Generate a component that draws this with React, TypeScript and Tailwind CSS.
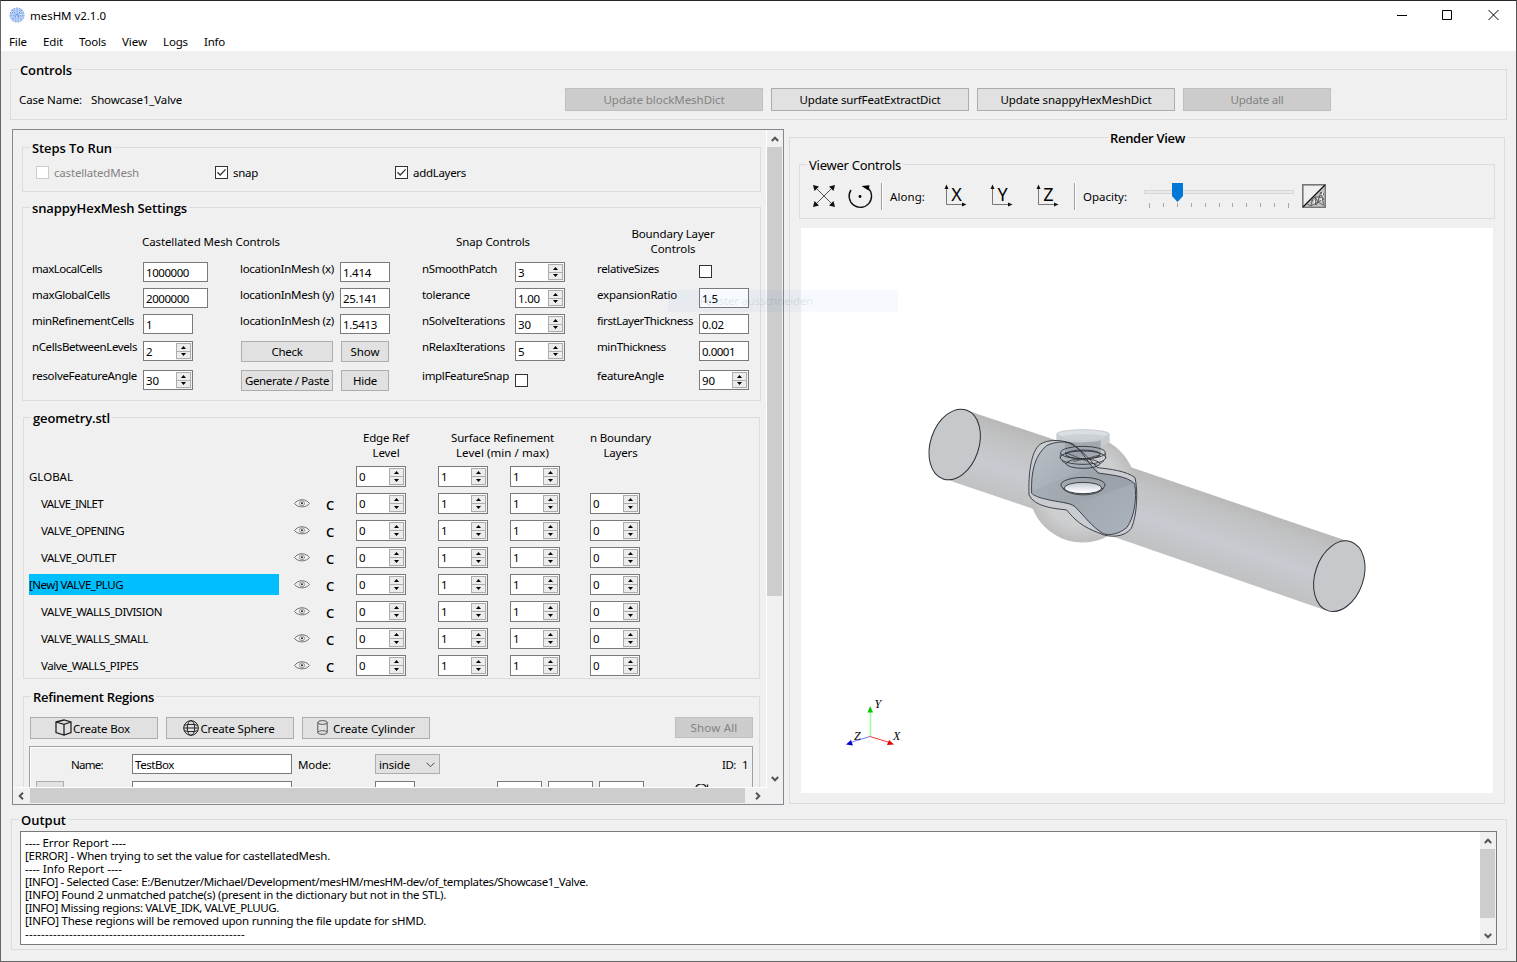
import { useLayoutEffect, useRef, useState } from "react";
import type { ReactNode } from "react";

/* Text run whose tracking is tuned so that it spans exactly `w` pixels. */
function Fit({ w, children, className = "" }: { w: number; children: string; className?: string }) {
  const ref = useRef<HTMLSpanElement>(null);
  const [ls, setLs] = useState(0);
  useLayoutEffect(() => {
    const el = ref.current;
    if (!el) return;
    const prev = el.style.letterSpacing;
    el.style.letterSpacing = "0px";
    const nat = el.getBoundingClientRect().width;
    el.style.letterSpacing = prev;
    setLs((w - nat) / children.length);
  }, [w, children]);
  return (
    <span ref={ref} className={"inline-block whitespace-pre " + className} style={{ letterSpacing: ls + "px" }}>
      {children}
    </span>
  );
}

function Group({ title, w, className = "", legendClass = "ml-[7px]", light = false, children }: {
  title: string; w: number; className?: string; legendClass?: string; light?: boolean; children?: ReactNode;
}) {
  return (
    <section className={"flex shrink-0 flex-col border border-[#dcdcdc] " + className}>
      <div className={"-mt-[10px] flex h-5 shrink-0 items-center self-start bg-[#f0f0f0] px-[2px] text-[13px] leading-5 " + legendClass + (light ? "" : " font-['Open_Sans','Noto_Sans',sans-serif] font-semibold")}>
        <Fit w={w}>{title}</Fit>
      </div>
      {children}
    </section>
  );
}

function Btn({ children, className = "", off = false }: { children?: ReactNode; className?: string; off?: boolean }) {
  return (
    <button className={"flex shrink-0 items-center justify-center border " + (off ? "border-[#bfbfbf] bg-[#cccccc] text-[#838383] " : "border-[#adadad] bg-[#e1e1e1] text-black ") + className}>
      {children}
    </button>
  );
}

function Check({ on = false, off = false }: { on?: boolean; off?: boolean }) {
  return (
    <span className={"flex size-[13px] shrink-0 items-center justify-center border bg-white " + (off ? "border-[#cccccc]" : "border-[#333333]")}>
      {on && (
        <svg width="11" height="11" viewBox="0 0 11 11" fill="none" stroke="#333" strokeWidth="1.3"><path d="M1.5 5.2 4.2 8 9.6 2.4" /></svg>
      )}
    </span>
  );
}

function Entry({ v = "", className = "w-[50px]", tw }: { v?: string; className?: string; tw?: number }) {
  return (
    <div className={"flex h-5 shrink-0 items-center border border-[#7a7a7a] bg-white pt-[2px] pl-[2px] leading-4 " + className}>
      <Fit w={tw ?? v.length * 6}>{v}</Fit>
    </div>
  );
}

function Spin({ v, className = "h-5 pt-px", tw }: { v: string; className?: string; tw?: number }) {
  return (
    <div className={"flex w-[50px] shrink-0 border border-[#7a7a7a] bg-white " + className}>
      <div className="flex flex-1 items-center pl-[2px] leading-4"><Fit w={tw ?? v.length * 6}>{v}</Fit></div>
      <div className="flex w-4 bg-[#f0f0f0] pr-px pb-px">
        <div className="flex flex-1 flex-col border border-[#acacac] bg-[#ececec]">
          <div className="flex flex-1 items-center justify-center border-b border-[#acacac]">
            <svg width="5" height="3" viewBox="0 0 5 3"><path d="M2.5 0 5 3H0z" /></svg>
          </div>
          <div className="flex flex-1 items-center justify-center">
            <svg width="5" height="3" viewBox="0 0 5 3"><path d="M2.5 3 5 0H0z" /></svg>
          </div>
        </div>
      </div>
    </div>
  );
}

function Chevron({ className = "" }: { className?: string }) {
  return (
    <svg className={className} width="8" height="6" viewBox="0 0 8 6" fill="none" stroke="#555" strokeWidth="2"><path d="M.8 5 4 1.7 7.2 5" /></svg>
  );
}

function AxisIcon({ l }: { l: string }) {
  return (
    <svg className="shrink-0 overflow-visible" width="24" height="24" viewBox="0 0 24 24">
      <path d="M3.5 4V20.5H19" fill="none" stroke="#777" />
      <path d="M1.5 5 3.5 .5 5.5 5zM19 18.500 23.500 20.500 19 22.500z" fill="#111" />
      <text x="13.500" y="16.500" fontSize="18" textAnchor="middle" fontFamily="Noto Sans, sans-serif">{l}</text>
    </svg>
  );
}

const menus: [string, number, string][] = [
  ["File", 18, "ml-2"], ["Edit", 20, "ml-4"], ["Tools", 27, "ml-4"], ["View", 25, "ml-4"], ["Logs", 25, "ml-4"], ["Info", 21, "ml-4"],
];

function TopBars() {
  return (
    <header className="shrink-0 bg-white">
      <div className="flex h-[30px] items-center pl-2">
        <svg className="-mt-[2px]" width="16" height="16" viewBox="0 0 16 16">
          <circle cx="8" cy="8" r="7.300" fill="#c9dbf8" />
          <g fill="none" stroke="#5b8fe0" strokeWidth=".9" strokeDasharray="1.700 1.200">
            <circle cx="8" cy="8" r="7" /><circle cx="8" cy="8" r="5.200" /><circle cx="8" cy="8" r="3.300" /><circle cx="8" cy="8" r="1.400" />
            <path d="M3 3l10 10M13 3 3 13" />
          </g>
        </svg>
        <Fit w={76} className="ml-[5px]">mesHM v2.1.0</Fit>
        <div className="flex-1" />
        <svg width="104" height="12" viewBox="0 0 104 12" className="mr-[16px] -mt-[2px]" fill="none" stroke="#000">
          <path d="M1 6.500h10M46.500 1.500h9v9h-9zM92.500 1l10 10M102.500 1l-10 10" />
        </svg>
      </div>
      <nav className="flex h-5 items-center pt-px">
        {menus.map(([t, w, m]) => <Fit key={t} w={w} className={m}>{t}</Fit>)}
      </nav>
    </header>
  );
}

function Controls() {
  return (
    <Group title="Controls" w={52} className="mt-[18px] ml-[9px] h-[51px] w-[1497px]">
      <div className="mt-2 flex h-[23px] items-center pl-2">
        <Fit w={63}>Case Name:</Fit>
        <Fit w={91} className="ml-[9px]">Showcase1_Valve</Fit>
        <Btn off className="ml-[383px] h-[23px] w-[198px]"><Fit w={121}>Update blockMeshDict</Fit></Btn>
        <Btn className="ml-2 h-[23px] w-[198px]"><Fit w={141}>Update surfFeatExtractDict</Fit></Btn>
        <Btn className="ml-2 h-[23px] w-[198px]"><Fit w={151}>Update snappyHexMeshDict</Fit></Btn>
        <Btn off className="ml-2 h-[23px] w-[148px]"><Fit w={53}>Update all</Fit></Btn>
      </div>
    </Group>
  );
}

function Steps() {
  return (
    <Group title="Steps To Run" w={80} className="mt-[17px] ml-[9px] h-[45px] w-[739px]">
      <div className="mt-2 flex h-[13px] items-center pl-[13px]">
        <Check off /><Fit w={85} className="ml-[5px] text-[#838383]">castellatedMesh</Fit>
        <span className="ml-[76px]" /><Check on /><Fit w={25} className="ml-[5px]">snap</Fit>
        <span className="ml-[137px]" /><Check on /><Fit w={53} className="ml-[5px]">addLayers</Fit>
      </div>
    </Group>
  );
}

function Label({ t, w, up = false }: { t: string; w: number; up?: boolean }) {
  return <div className={"h-[15px] leading-[15px] " + (up ? "-mt-[2px]" : "-mt-px")}><Fit w={w}>{t}</Fit></div>;
}

function Settings() {
  return (
    <Group title="snappyHexMesh Settings" w={155} className="mt-[15px] ml-[9px] h-[194px] w-[739px]">
      <div className="flex h-11 shrink-0 items-center pt-[2px] leading-[15px]">
        <Fit w={138} className="ml-[119px]">Castellated Mesh Controls</Fit>
        <Fit w={74} className="ml-[176px]">Snap Controls</Fit>
        <div className="ml-[93px] flex w-[100px] flex-col items-center"><Fit w={83}>Boundary Layer</Fit><Fit w={45}>Controls</Fit></div>
      </div>
      <div className="ml-[9px] grid grid-cols-[111px_97px_100px_82px_93px_82px_102px_60px] grid-rows-[26px_26px_27px_29px_21px] items-start justify-items-start">
        <Label t="maxLocalCells" w={70} /><Entry v="1000000" className="w-[65px]" tw={43} />
        <Label t="locationInMesh (x)" w={94} /><Entry v="1.414" tw={28} />
        <Label t="nSmoothPatch" w={75} /><Spin v="3" />
        <Label t="relativeSizes" w={62} /><span className="pt-[3px]"><Check /></span>

        <Label t="maxGlobalCells" w={78} /><Entry v="2000000" className="w-[65px]" tw={43} />
        <Label t="locationInMesh (y)" w={94} /><Entry v="25.141" tw={34} />
        <Label t="tolerance" w={48} /><Spin v="1.00" tw={22} />
        <Label t="expansionRatio" w={80} /><Entry v="1.5" tw={16} />

        <Label t="minRefinementCells" w={102} /><Entry v="1" />
        <Label t="locationInMesh (z)" w={94} /><Entry v="1.5413" tw={34} />
        <Label t="nSolveIterations" w={83} /><Spin v="30" tw={13} />
        <Label t="firstLayerThickness" w={96} /><Entry v="0.02" tw={22} />

        <Label up t="nCellsBetweenLevels" w={105} /><Spin v="2" />
        <Btn className="ml-px h-[21px] w-[92px]"><Fit w={31}>Check</Fit></Btn><Btn className="ml-px h-[21px] w-12"><Fit w={29}>Show</Fit></Btn>
        <Label up t="nRelaxIterations" w={83} /><Spin v="5" />
        <Label up t="minThickness" w={69} /><Entry v="0.0001" tw={33} />

        <Label up t="resolveFeatureAngle" w={105} /><Spin v="30" tw={13} />
        <Btn className="ml-px h-[21px] w-[92px]"><Fit w={84}>Generate / Paste</Fit></Btn><Btn className="ml-px h-[21px] w-12"><Fit w={24}>Hide</Fit></Btn>
        <Label up t="implFeatureSnap" w={87} /><span className="pt-1"><Check /></span>
        <Label up t="featureAngle" w={67} /><Spin v="90" tw={13} />
      </div>
    </Group>
  );
}

const patches: { n: string; w: number; sel?: boolean }[] = [
  { n: "VALVE_INLET", w: 62 }, { n: "VALVE_OPENING", w: 83 }, { n: "VALVE_OUTLET", w: 75 },
  { n: "[New] VALVE_PLUG", w: 94, sel: true },
  { n: "VALVE_WALLS_DIVISION", w: 121 }, { n: "VALVE_WALLS_SMALL", w: 107 }, { n: "Valve_WALLS_PIPES", w: 97 },
];

function Geometry() {
  return (
    <Group title="geometry.stl" w={77} className="mt-4 ml-[10px] h-[262px] w-[737px]">
      <div className="mt-[2px] flex h-9 shrink-0 leading-[15px]">
        <div className="ml-[322px] flex w-20 flex-col items-center"><Fit w={46}>Edge Ref</Fit><Fit w={27}>Level</Fit></div>
        <div className="ml-[7px] flex w-[140px] flex-col items-center pr-[1px]"><Fit w={103}>Surface Refinement</Fit><Fit w={93}>Level (min / max)</Fit></div>
        <div className="ml-[7px] flex w-20 flex-col items-center pl-[1px]"><Fit w={61}>n Boundary</Fit><Fit w={34}>Layers</Fit></div>
      </div>
      <div className="ml-[5px] flex flex-col gap-[6px]">
        <div className="flex h-[21px] items-center">
          <div className="w-[250px]"><Fit w={44}>GLOBAL</Fit></div>
          <Spin v="0" className="ml-[77px] h-[21px] pt-px" /><Spin v="1" className="ml-8 h-[21px] pt-px" /><Spin v="1" className="ml-[22px] h-[21px] pt-px" />
        </div>
        {patches.map((p) => (
          <div key={p.n} className="flex h-[21px] items-center">
            <div className={"flex h-[21px] w-[250px] items-center pt-px " + (p.sel ? "bg-[#00bfff]" : "pl-3")}><Fit w={p.w}>{p.n}</Fit></div>
            <svg className="ml-[15px]" width="16" height="9" viewBox="0 0 16 9" fill="none" stroke="#666" strokeWidth=".9">
              <path d="M.5 4.500C4-.5 12-.5 15.500 4.500 12 9 4 9 .5 4.500z" /><circle cx="8" cy="4.300" r="2.500" stroke="#888" /><circle cx="8" cy="4.300" r="1" fill="#222" stroke="none" />
            </svg>
            <span className="ml-4 w-[30px] pt-[2px] font-['Open_Sans','Noto_Sans',sans-serif] text-[13px] font-semibold">C</span>
            <Spin v="0" className="h-[21px] pt-px" /><Spin v="1" className="ml-8 h-[21px] pt-px" /><Spin v="1" className="ml-[22px] h-[21px] pt-px" /><Spin v="0" className="ml-[30px] h-[21px] pt-px" />
          </div>
        ))}
      </div>
    </Group>
  );
}

function Refinement() {
  return (
    <Group title="Refinement Regions" w={121} className="mt-[17px] ml-[10px] h-[200px] w-[737px]">
      <div className="mt-[10px] ml-[6px] flex">
        <Btn className="h-[22px] w-32 pr-[3px]">
          <svg className="-mt-px mr-[1px]" width="17" height="17" viewBox="0 0 17 17" fill="none" stroke="#222" strokeWidth="1.300"><path d="M1 3 9 1l7 2v10.500L9 16l-8-2.500zM1 3l8 2.300L16 3M9 5.300V16" /></svg>
          <Fit w={57} className="pt-px">Create Box</Fit>
        </Btn>
        <Btn className="ml-2 h-[22px] w-32 pr-[3px]">
          <svg className="-mt-px mr-[2px]" width="16" height="16" viewBox="0 0 16 16" fill="none" stroke="#222"><circle cx="8" cy="8" r="7.300" /><ellipse cx="8" cy="8" rx="3.700" ry="7.300" /><path d="M1.200 5.500C4 4 12 4 14.800 5.500M1.200 10.500C4 12 12 12 14.800 10.500M.7 8h14.600" /></svg>
          <Fit w={74} className="pt-px">Create Sphere</Fit>
        </Btn>
        <Btn className="ml-2 h-[22px] w-32">
          <svg className="-mt-px mr-[5px]" width="11" height="15" viewBox="0 0 11 15" fill="none" stroke="#555"><ellipse cx="5.500" cy="2.500" rx="4.700" ry="1.900" /><path d="M.8 2.500v10c0 2.400 9.400 2.400 9.400 0v-10M.8 12.500c0-2.400 9.400-2.400 9.400 0" /></svg>
          <Fit w={82} className="pt-px">Create Cylinder</Fit>
        </Btn>
        <Btn off className="ml-[245px] h-[21px] w-[78px]"><Fit w={47}>Show All</Fit></Btn>
      </div>
      <div className="mt-[7px] ml-[5px] h-[120px] w-[724px] border border-[#a0a0a0]">
        <div className="border-t border-l border-white">
          <div className="mt-[6px] flex h-5 items-center">
            <Fit w={32} className="ml-10 pt-[2px]">Name:</Fit>
            <div className="ml-[29px] flex h-5 w-[160px] items-center border border-[#7a7a7a] bg-white pt-[2px] pl-[2px]"><Fit w={39}>TestBox</Fit></div>
            <Fit w={33} className="ml-[6px] pt-[2px]">Mode:</Fit>
            <div className="ml-11 flex h-5 w-[65px] items-center justify-between border border-[#adadad] bg-[#e1e1e1] pt-[2px] pr-1 pl-[3px]">
              <Fit w={31}>inside</Fit>
              <svg width="9" height="6" viewBox="0 0 9 6" fill="none" stroke="#444"><path d="M.5 .7 4.500 4.700 8.500 .7" /></svg>
            </div>
            <Fit w={14} className="ml-[282px] pt-[2px]">ID:</Fit><Fit w={6} className="ml-[6px] pt-[2px]">1</Fit>
          </div>
          <div className="mt-[7px] flex items-start">
            <Btn className="ml-[5px] h-5 w-7" />
            <Entry className="ml-[68px] w-[160px]" /><Entry className="ml-[83px] w-10" />
            <Entry className="ml-[82px] w-[45px]" /><Entry className="ml-[6px] w-[45px]" /><Entry className="ml-[6px] w-[45px]" />
            <svg className="mt-[3px] ml-[51px]" width="14" height="12" viewBox="0 0 14 12" fill="none" stroke="#222" strokeWidth="1.400"><path d="M1 8A5.500 5.500 0 0 1 11 3M12.500 .5V4H9" /></svg>
          </div>
        </div>
      </div>
    </Group>
  );
}

function LeftPanel() {
  return (
    <div className="ml-[11px] flex h-[676px] w-[772px] shrink-0 flex-col border border-[#828790]">
      <div className="flex h-[657px]">
        <div className="h-[657px] w-[753px] overflow-hidden"><Steps /><Settings /><Geometry /><Refinement /></div>
        <div className="w-px bg-white" />
        <div className="flex w-[15px] flex-col items-center">
          <div className="flex h-[17px] shrink-0 items-center pt-px"><Chevron /></div>
          <div className="h-[449px] w-[15px] bg-[#cdcdcd]" />
          <div className="flex-1" />
          <div className="flex h-[17px] items-center"><Chevron className="rotate-180" /></div>
        </div>
      </div>
      <div className="mr-4 h-px shrink-0 bg-white" />
      <div className="flex h-4 items-start">
        <div className="flex h-[15px] w-[17px] items-center pl-1"><Chevron className="-rotate-90" /></div>
        <div className="h-[15px] w-[715px] bg-[#cdcdcd]" />
        <div className="ml-2 flex h-[15px] w-[9px] items-center justify-center"><Chevron className="rotate-90" /></div>
      </div>
    </div>
  );
}

function ViewerControls() {
  return (
    <Group title="Viewer Controls" w={92} light className="mt-4 ml-[9px] h-[55px] w-[696px]">
      <div className="flex h-[42px] items-center">
        <svg className="ml-[13px] shrink-0" width="22" height="22" viewBox="0 0 22 22">
          <path d="M2 2l18 18M20 2 2 20" stroke="#555" /><path d="M0 0l6 1.500L1.500 6zM22 0l-6 1.500L20.500 6zM0 22l6-1.500L1.500 16zM22 22l-6-1.500 4.500-4.500z" fill="#111" />
        </svg>
        <svg className="ml-3 shrink-0" width="26" height="26" viewBox="0 0 26 26">
          <path d="M4 7A11.200 11.200 0 1 0 21 5" fill="none" stroke="#111" strokeWidth="1.400" /><path d="M14.500 3 22.500 2.200 21.500 7.500z" /><circle cx="13" cy="13.500" r="1.400" />
        </svg>
        <div className="ml-2 h-[27px] w-px shrink-0 bg-[#a0a0a0]" /><div className="h-[27px] w-px shrink-0 bg-white" />
        <Fit w={35} className="ml-[7px] pt-[2px]">Along:</Fit>
        <span className="ml-[18px] flex gap-[22px]"><AxisIcon l="X" /><AxisIcon l="Y" /><AxisIcon l="Z" /></span>
        <div className="ml-[15px] h-[27px] w-px shrink-0 bg-[#a0a0a0]" /><div className="h-[27px] w-px shrink-0 bg-white" />
        <Fit w={44} className="ml-[7px] pt-[2px]">Opacity:</Fit>
        <svg className="ml-[17px] shrink-0" width="151" height="28" viewBox="0 0 151 28">
          <rect x=".5" y="8.500" width="149" height="3" fill="#e7eaea" stroke="#d6d6d6" />
          <path d="M5.500 21v5M19.500 21v4M33.500 21v4M47.500 21v4M61.500 21v4M75.500 21v4M88.500 21v4M102.500 21v4M116.500 21v4M130.500 21v4M144.500 21v5" stroke="#a8a79c" />
          <path d="M28 1h11v13l-5.500 6L28 14z" fill="#0078d7" />
        </svg>
        <svg className="ml-[7px] shrink-0" width="24" height="24" viewBox="0 0 24 24">
          <rect x=".8" y=".8" width="22.400" height="22.400" fill="none" stroke="#777" strokeWidth="1.600" />
          <path d="M2 22 22 2v20z" fill="#c4c4c4" /><path d="M1 23 23 1" stroke="#111" strokeWidth="1.300" />
          <path d="M5 20l4 2 1-6 4 5 2-3 5 3M10 16l3-3 3 5 1-5 5 2M13 13l4 0 2-5 3 3M14 21l-1-8M17 13l5-4M19 8l3 14M16 18l6-3M9 22l7-4" fill="none" stroke="#444" strokeWidth=".7" />
          <path d="M11 18l2 2v-4zM18 15l2 2v-3zM19 11l2 0v-3z" fill="#fff" />
        </svg>
      </div>
    </Group>
  );
}

function Scene() {
  return (
    <svg width="692" height="565" viewBox="801 228 692 565">
      <defs>
        <linearGradient id="pipe" gradientUnits="userSpaceOnUse" x1="1172" y1="481" x2="1149" y2="549">
          <stop offset="0" stopColor="#b9b9b9" /><stop offset=".2" stopColor="#c1c2c3" /><stop offset=".6" stopColor="#c7cad0" /><stop offset="1" stopColor="#c0c1c2" />
        </linearGradient>
        <radialGradient id="ball" cx=".5" cy=".5" r=".5"><stop offset="0" stopColor="#cdd0d5" /><stop offset=".7" stopColor="#cdced0" /><stop offset="1" stopColor="#bdbdbd" /></radialGradient>
        <linearGradient id="cut" x1="0" y1="0" x2="1" y2="1"><stop offset="0" stopColor="#bac0c6" /><stop offset=".5" stopColor="#a0a7af" /><stop offset="1" stopColor="#aab2bb" /></linearGradient>
        <linearGradient id="floor" x1="0" y1="0" x2="1" y2="0"><stop offset="0" stopColor="#a5abb2" /><stop offset="1" stopColor="#979da4" /></linearGradient>
        <linearGradient id="hole" x1="0" y1="0" x2="0" y2="1"><stop offset="0" stopColor="#bfc5cf" /><stop offset=".8" stopColor="#fafbff" /></linearGradient>
      </defs>
      <path d="M970 411.500 1060 441.500V518L942 478z" fill="url(#pipe)" />
      <path d="M1120 463.500 1348 541.300 1326 610.500 1100 532z" fill="url(#pipe)" />
      <circle cx="1082.500" cy="489" r="53.500" fill="url(#ball)" />
      <g fill="#c6c9cc" stroke="#2c2e32" strokeWidth="1">
        <ellipse cx="954.700" cy="444.500" rx="24.200" ry="36.300" transform="rotate(18.600 954.700 444.500)" />
        <ellipse cx="1339.300" cy="576.200" rx="24.200" ry="36.300" transform="rotate(18.600 1339.300 576.200)" />
      </g>
      <g transform="translate(1010 415) scale(.33333)" strokeLinejoin="round">
        <path d="M139 58C139 38 299 38 299 58L299 82 272 95H165L139 80z" fill="#c8cbcf" />
        <ellipse cx="219" cy="57" rx="76" ry="11" fill="#dadee5" />
        <ellipse cx="219" cy="66" rx="66" ry="9" fill="#cdd0d5" />
        <path d="M57 240C55 180 62 110 90 88 115 72 150 76 165 80 205 90 235 130 262 158 300 162 350 168 375 188 384 225 382 300 364 340 345 366 300 370 270 355 215 335 195 315 170 285 130 280 75 276 60 246z" fill="#c9ccd0" />
        <path d="M65 235C62 170 75 120 110 92 135 78 175 78 190 88 220 110 240 155 265 174 300 180 350 182 374 206 382 250 372 310 350 338 325 358 300 362 280 356 245 335 225 305 195 275 180 262 145 262 110 253 85 248 70 240 65 235z" fill="url(#cut)" />
        <path d="M66 228 255 150 266 173C300 180 345 182 373 205L190 270C150 262 95 252 66 228z" fill="url(#floor)" opacity=".75" />
        <path d="M165 78C185 84 252 84 272 76V125H165z" fill="#9199a4" opacity=".7" />
        <g fill="none" stroke="#30333a" strokeWidth="2.700">
          <path d="M57 240C55 180 62 110 90 88 115 72 150 76 165 80 205 90 235 130 262 158 300 162 350 168 375 188 384 225 382 300 364 340 345 366 300 370 270 355 215 335 195 315 170 285 130 280 75 276 57 240" />
          <path d="M65 235C62 170 75 120 110 92 135 78 175 78 190 88 220 110 240 155 265 174 300 180 350 182 374 206 382 250 372 310 350 338 325 358 300 362 280 356 245 335 225 305 195 275 180 262 145 262 110 253 85 248 70 240 65 235" />
          <ellipse cx="219" cy="113" rx="67" ry="19" /><ellipse cx="219" cy="118" rx="52" ry="13" /><ellipse cx="219" cy="128" rx="68" ry="20" /><ellipse cx="219" cy="146" rx="50" ry="14" />
          <path d="M151 115v16M287 115v16M156 138l14 10M282 138l-14 10M165 112l100 40M270 120l-80 20" strokeWidth="2" />
          <ellipse cx="219" cy="210" rx="66" ry="23" /><ellipse cx="219" cy="219" rx="56" ry="17" fill="url(#hole)" /><path d="M158 220C180 246 260 246 281 220" strokeWidth="2.500" />
        </g>
      </g>
      <path d="M870.500 736V712" stroke="#9f9" strokeWidth="1.500" /><path d="M867.500 712.500 870.200 706 873 712.500z" fill="#0c0" />
      <path d="M870 736.500 888 742" stroke="#f33" /><path d="M894 744.500 887 745 889 740z" fill="#d00" />
      <path d="M870 736.500 852 742" stroke="#77f" /><path d="M846 744.500 853 745.500 851 740z" fill="#00c" />
      <g fontFamily="Liberation Serif, serif" fontStyle="italic" fontSize="12"><text x="874.500" y="708">Y</text><text x="893" y="740">X</text><text x="854" y="740">Z</text></g>
    </svg>
  );
}

function RenderView() {
  return (
    <Group title="Render View" w={75} legendClass="ml-[318px]" className="mt-2 ml-[5px] h-[667px] w-[716px]">
      <ViewerControls />
      <div className="mt-[9px] ml-[11px] h-[565px] w-[692px] shrink-0 bg-white"><Scene /></div>
    </Group>
  );
}

const log: [string, number][] = [
  ["---- Error Report ----", 101], ["[ERROR] - When trying to set the value for castellatedMesh.", 305], ["---- Info Report ----", 97],
  ["[INFO] - Selected Case: E:/Benutzer/Michael/Development/mesHM/mesHM-dev/of_templates/Showcase1_Valve.", 563],
  ["[INFO] Found 2 unmatched patche(s) (present in the dictionary but not in the STL).", 421],
  ["[INFO] Missing regions: VALVE_IDK, VALVE_PLUUG.", 254],
  ["[INFO] These regions will be removed upon running the file update for sHMD.", 401],
  ["-------------------------------------------------------", 220],
];

function Output() {
  return (
    <Group title="Output" w={45} className="mt-[14px] ml-[10px] h-[131px] w-[1496px]">
      <div className="mt-px ml-2 flex h-[114px] w-[1477px] shrink-0 border border-[#7a7a7a] bg-white">
        <div className="flex flex-1 flex-col pt-1 pl-1">
          {log.map(([t, w], i) => <div key={i} className="h-[13px] leading-[14px]"><Fit w={w}>{t}</Fit></div>)}
        </div>
        <div className="flex w-4 flex-col items-start bg-[#f0f0f0]">
          <div className="flex h-[17px] w-[15px] shrink-0 items-center justify-center"><Chevron /></div>
          <div className="h-[69px] w-[15px] bg-[#cdcdcd]" />
          <div className="flex-1" />
          <div className="flex h-[17px] w-[15px] items-center justify-center"><Chevron className="rotate-180" /></div>
        </div>
      </div>
    </Group>
  );
}

export default function App() {
  return (
    <div className="relative flex h-[962px] w-[1517px] flex-col overflow-hidden border border-t-[#26232a] border-r-[#55555a] border-b-[#666666] border-l-[#666666] bg-[#f0f0f0] font-['Noto_Sans',sans-serif] text-[11.5px] leading-4 text-black">
      <TopBars />
      <Controls />
      <div className="mt-[9px] flex shrink-0 items-start"><LeftPanel /><RenderView /></div>
      <Output />
      <div className="pointer-events-none absolute top-[289px] left-[667px] flex h-[22px] w-[230px] items-center bg-[#0078d7]/[0.035] pl-8 text-black/10">
        <Fit w={113}>Fenster ausschneiden</Fit>
      </div>
    </div>
  );
}
